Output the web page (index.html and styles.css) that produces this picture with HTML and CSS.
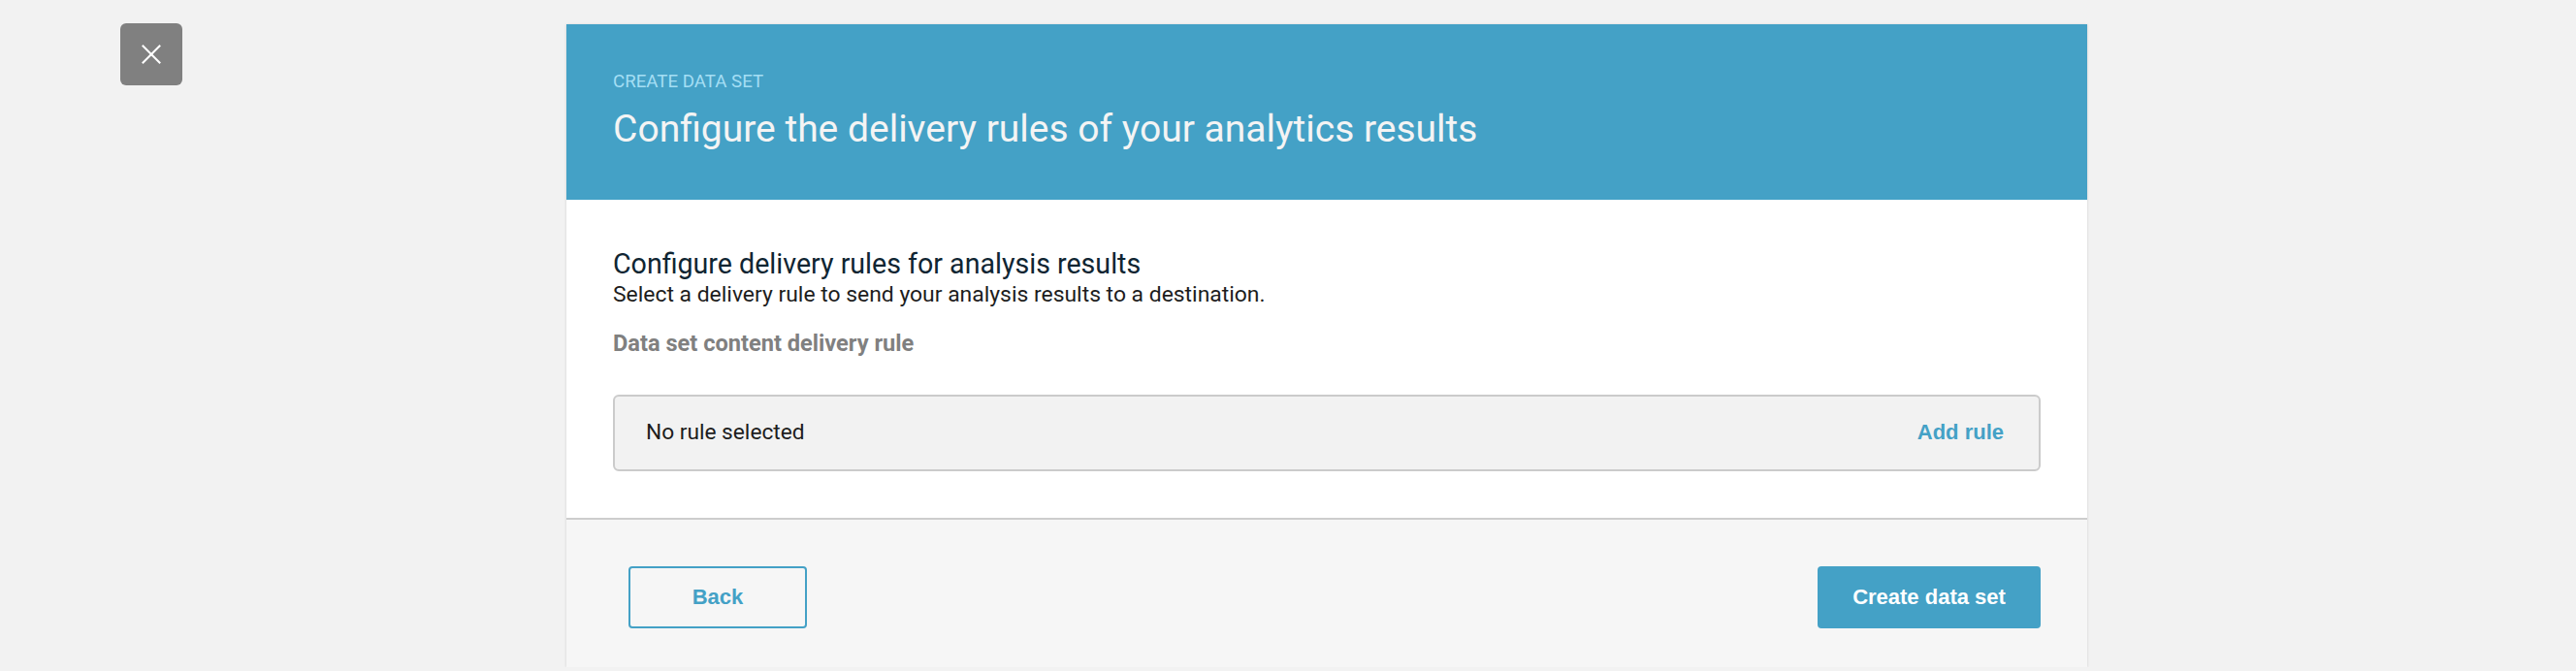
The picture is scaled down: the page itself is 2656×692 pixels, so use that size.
FILE: index.html
```html
<!DOCTYPE html>
<html lang="en">
<head>
<meta charset="utf-8">
<title>Create data set</title>
<link rel="stylesheet" href="styles.css">
</head>
<body>
  <button class="close-btn" type="button" aria-label="Close">
    <svg class="close-icon" viewBox="0 0 20 20" width="20" height="20">
      <line x1="1.5" y1="1.5" x2="18.5" y2="18.5"/>
      <line x1="18.5" y1="1.5" x2="1.5" y2="18.5"/>
    </svg>
  </button>
  <main class="stage">
    <section class="wizard">
      <header class="wizard-header">
        <div class="eyebrow">CREATE DATA SET</div>
        <h1 class="wizard-title">Configure the delivery rules of your analytics results</h1>
      </header>
      <div class="wizard-body">
        <h2 class="section-title">Configure delivery rules for analysis results</h2>
        <p class="section-desc">Select a delivery rule to send your analysis results to a destination.</p>
        <div class="field-label">Data set content delivery rule</div>
        <div class="rule-box">
          <span class="rule-empty">No rule selected</span>
          <a class="rule-add" href="#">Add rule</a>
        </div>
      </div>
      <footer class="wizard-footer">
        <button class="btn btn-secondary" type="button">Back</button>
        <button class="btn btn-primary" type="button">Create data set</button>
      </footer>
    </section>
  </main>
</body>
</html>
```
FILE: styles.css
```css
html, body {
  margin: 0;
  padding: 0;
  background: #f2f2f2;
  overflow: hidden;
}

body {
  font-family: Roboto, "Liberation Sans", Arial, sans-serif;
  color: #1b1b1b;
}

.close-btn {
  position: fixed;
  left: 124px;
  top: 24px;
  width: 64px;
  height: 64px;
  border: none;
  border-radius: 6px;
  background: #808080;
  display: flex;
  align-items: center;
  justify-content: center;
  padding: 0;
  cursor: pointer;
}

.close-icon line {
  stroke: #ffffff;
  stroke-width: 2;
  stroke-linecap: square;
}

.stage {
  display: flex;
  justify-content: center;
  padding: 25px 0 0 80px;
}

.wizard {
  width: 1568px;
  flex: none;
  background: #ffffff;
  box-shadow: 1px 0 2px rgba(0, 0, 0, 0.07), -1px 0 2px rgba(0, 0, 0, 0.07);
}

.wizard-header {
  background: #44a1c6;
  padding: 48px 48px 49px;
}

.eyebrow {
  font-size: 18.7px;
  line-height: 22px;
  color: #a4def4;
}

.wizard-title {
  margin: 14px 0 0;
  font-size: 39px;
  line-height: 48px;
  font-weight: 400;
  color: #f4f4f4;
}

.wizard-body {
  padding: 48px 48px 48px;
}

.section-title {
  margin: 0;
  font-size: 28.6px;
  line-height: 36px;
  font-weight: 400;
  color: #0f2532;
}

.section-desc {
  margin: 0;
  font-size: 22.9px;
  line-height: 28px;
  color: #1d1d1d;
}

.field-label {
  margin-top: 21.5px;
  font-size: 23.6px;
  line-height: 28px;
  font-weight: 700;
  color: #808080;
}

.rule-box {
  margin-top: 39px;
  height: 79px;
  box-sizing: border-box;
  border: 2px solid #cbcbcb;
  border-radius: 6px;
  background: #f2f2f2;
  display: flex;
  align-items: center;
  justify-content: space-between;
  padding: 0 36px 0 32px;
}

.rule-empty {
  font-size: 22.7px;
  line-height: 28px;
  color: #1d1d1d;
}

.rule-add {
  font-family: "Liberation Sans", Arial, sans-serif;
  font-weight: 700;
  font-size: 22px;
  line-height: 28px;
  color: #44a1c6;
  text-decoration: none;
}

.wizard-footer {
  background: #f6f6f6;
  border-top: 2px solid #cdcdcd;
  display: flex;
  justify-content: space-between;
  align-items: center;
  padding: 48px 48px 40px 64px;
}

.btn {
  font-family: "Liberation Sans", Arial, sans-serif;
  font-weight: 700;
  font-size: 22px;
  height: 64px;
  border-radius: 4px;
  box-sizing: border-box;
  cursor: pointer;
}

.btn-secondary {
  width: 184px;
  background: transparent;
  border: 2px solid #44a1c6;
  color: #44a1c6;
}

.btn-primary {
  width: 230px;
  background: #44a1c6;
  border: none;
  color: #ffffff;
}
```
